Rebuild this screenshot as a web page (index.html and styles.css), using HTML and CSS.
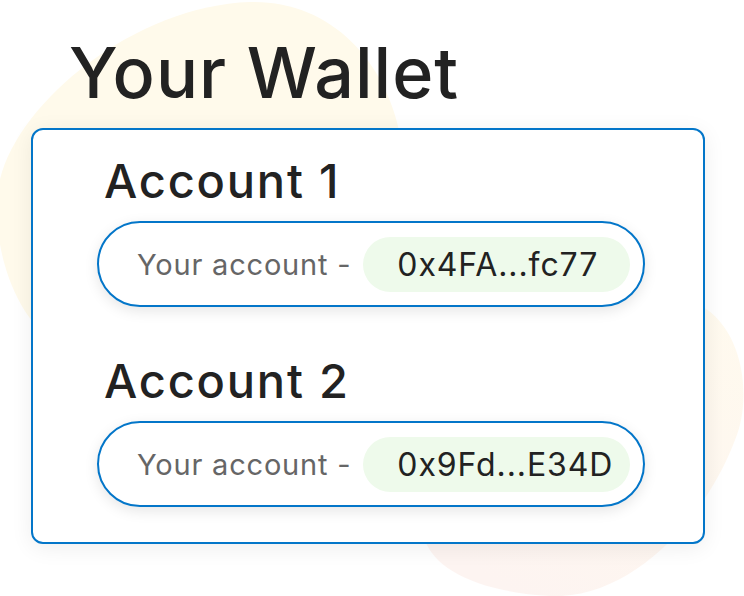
FILE: index.html
```html
<!DOCTYPE html>
<html lang="en">

<head>
    <meta charset="UTF-8">
    <meta name="viewport" content="width=device-width, initial-scale=1.0">
    <title>Your Wallet</title>
    <link rel="stylesheet" href="styles.css">
</head>

<body>
    <svg class="blobs" width="744" height="596" viewBox="0 0 744 596">
        <defs>
            <linearGradient id="peach" x1="1" y1="0" x2="0.3" y2="1">
                <stop offset="0" stop-color="#fffaee" />
                <stop offset="1" stop-color="#fdf4f1" />
            </linearGradient>
        </defs>
        <path fill="#fffaeb" d="M250,2 C330,0 385,60 400,135 L420,330 L40,330 C10,300 -8,240 -2,190 C8,110 130,6 250,2 Z" />
        <path fill="url(#peach)" d="M700,305 C745,330 752,400 735,440 C705,520 630,600 550,596 C480,592 435,570 425,540 L420,320 Z" />
    </svg>

    <div class="page">
        <h1 class="title">Your Wallet</h1>

        <div class="wallet">
            <div class="account">
                <h2 class="account-name">Account 1</h2>
                <div class="address-pill">
                    <span class="address-label">Your account -</span>
                    <span class="address-chip">0x4FA...fc77</span>
                </div>
            </div>

            <div class="account">
                <h2 class="account-name">Account 2</h2>
                <div class="address-pill">
                    <span class="address-label">Your account -</span>
                    <span class="address-chip">0x9Fd...E34D</span>
                </div>
            </div>
        </div>
    </div>
</body>

</html>
```

FILE: styles.css
```css
* {
    margin: 0px;
    padding: 0px;
    box-sizing: border-box;
}

body {
    position: relative;
    width: 744px;
    height: 596px;
    overflow: hidden;
    background-color: #fff;
    font-family: Inter, "Liberation Sans", sans-serif;
    color: #222;
}

.blobs {
    position: absolute;
    top: 0px;
    left: 0px;
    z-index: 0;
}

.page {
    position: relative;
    z-index: 1;
}

.title {
    margin: 38px 0 0 69px;
    font-size: 70px;
    line-height: 70px;
    font-weight: 500;
    letter-spacing: 1px;
}

.wallet {
    width: 674px;
    height: 416px;
    margin: 20px 0 0 31px;
    padding: 27px 58px 0 64px;
    background-color: #fff;
    border: 2px solid #0376c9;
    border-radius: 12px;
    box-shadow: 0 4px 22px rgba(0, 0, 0, 0.07);
}

.account + .account {
    margin-top: 50px;
}

.account-name {
    padding-left: 7px;
    font-size: 47px;
    line-height: 47px;
    font-weight: 500;
    letter-spacing: 1.8px;
}

.address-pill {
    display: flex;
    align-items: center;
    height: 86px;
    margin-top: 17px;
    padding: 0 13px 0 38px;
    border: 2px solid #0376c9;
    border-radius: 43px;
    background-color: #fff;
    box-shadow: 0 4px 14px rgba(0, 0, 0, 0.1);
}

.address-label {
    font-size: 29px;
    color: #666;
    letter-spacing: 0.8px;
}

.address-chip {
    flex: 1;
    display: flex;
    align-items: center;
    height: 55px;
    margin-left: 12px;
    padding-left: 34px;
    border-radius: 28px;
    background-color: #eefaeb;
    font-size: 32px;
    color: #222;
    letter-spacing: 0.9px;
}
```
